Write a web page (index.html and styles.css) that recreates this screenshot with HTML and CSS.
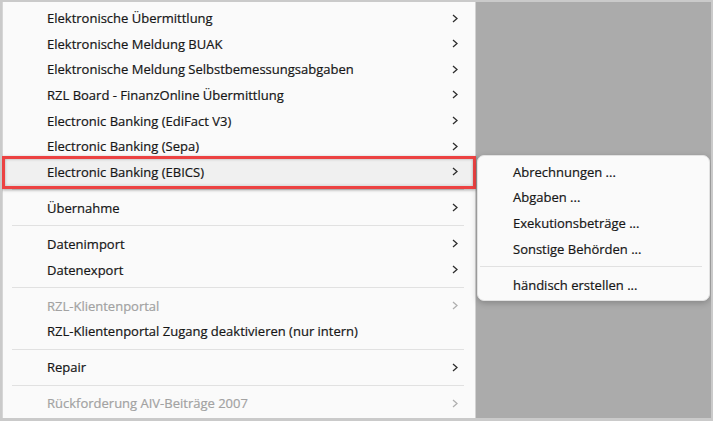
FILE: index.html
```html
<!DOCTYPE html>
<html lang="de">
<head>
<meta charset="utf-8">
<title>Menü</title>
<link rel="stylesheet" href="styles.css">
</head>
<body>
<div class="desktop">
  <div class="menu">
    <div class="item"><span class="label">Elektronische Übermittlung</span><svg class="chev" viewBox="0 0 6 9"><path d="M1 1 L5 4.5 L1 8"/></svg></div>
    <div class="item"><span class="label">Elektronische Meldung BUAK</span><svg class="chev" viewBox="0 0 6 9"><path d="M1 1 L5 4.5 L1 8"/></svg></div>
    <div class="item"><span class="label">Elektronische Meldung Selbstbemessungsabgaben</span><svg class="chev" viewBox="0 0 6 9"><path d="M1 1 L5 4.5 L1 8"/></svg></div>
    <div class="item"><span class="label">RZL Board - FinanzOnline Übermittlung</span><svg class="chev" viewBox="0 0 6 9"><path d="M1 1 L5 4.5 L1 8"/></svg></div>
    <div class="item"><span class="label">Electronic Banking (EdiFact V3)</span><svg class="chev" viewBox="0 0 6 9"><path d="M1 1 L5 4.5 L1 8"/></svg></div>
    <div class="item"><span class="label">Electronic Banking (Sepa)</span><svg class="chev" viewBox="0 0 6 9"><path d="M1 1 L5 4.5 L1 8"/></svg></div>
    <div class="item active"><span class="label">Electronic Banking (EBICS)</span><svg class="chev" viewBox="0 0 6 9"><path d="M1 1 L5 4.5 L1 8"/></svg></div>
    <div class="sep"></div>
    <div class="item"><span class="label">Übernahme</span><svg class="chev" viewBox="0 0 6 9"><path d="M1 1 L5 4.5 L1 8"/></svg></div>
    <div class="sep"></div>
    <div class="item"><span class="label">Datenimport</span><svg class="chev" viewBox="0 0 6 9"><path d="M1 1 L5 4.5 L1 8"/></svg></div>
    <div class="item"><span class="label">Datenexport</span><svg class="chev" viewBox="0 0 6 9"><path d="M1 1 L5 4.5 L1 8"/></svg></div>
    <div class="sep"></div>
    <div class="item disabled"><span class="label">RZL-Klientenportal</span><svg class="chev" viewBox="0 0 6 9"><path d="M1 1 L5 4.5 L1 8"/></svg></div>
    <div class="item"><span class="label">RZL-Klientenportal Zugang deaktivieren (nur intern)</span></div>
    <div class="sep"></div>
    <div class="item"><span class="label">Repair</span><svg class="chev" viewBox="0 0 6 9"><path d="M1 1 L5 4.5 L1 8"/></svg></div>
    <div class="sep"></div>
    <div class="item disabled"><span class="label">Rückforderung AIV-Beiträge 2007</span><svg class="chev" viewBox="0 0 6 9"><path d="M1 1 L5 4.5 L1 8"/></svg></div>
    <div class="item disabled"><span class="label">&nbsp;</span></div>
  </div>
  <div class="submenu">
    <div class="item"><span class="label">Abrechnungen ...</span></div>
    <div class="item"><span class="label">Abgaben ...</span></div>
    <div class="item"><span class="label">Exekutionsbeträge ...</span></div>
    <div class="item"><span class="label">Sonstige Behörden ...</span></div>
    <div class="sep"></div>
    <div class="item"><span class="label">händisch erstellen ...</span></div>
  </div>
</div>
</body>
</html>
```
FILE: styles.css
```css
html, body {
  margin: 0;
  padding: 0;
}
body {
  width: 713px;
  height: 421px;
  box-sizing: border-box;
  padding: 2px 2px 3px 2px;
  background: #cacaca;
  font-family: "Open Sans", "Noto Sans", sans-serif;
  font-size: 13px;
  color: #161616;
  -webkit-text-stroke: 0.2px currentColor;
  overflow: hidden;
}
.desktop {
  position: relative;
  height: 100%;
  background: #ababab;
  overflow: hidden;
}
.menu {
  width: 474px;
  box-sizing: border-box;
  background: #fafafa;
  border-left: 1px solid #d6d6d6;
  border-right: 1px solid #d2d2d2;
  padding-top: 3.2px;
  padding-bottom: 4px;
}
.item {
  position: relative;
  display: flex;
  align-items: center;
  height: 25.67px;
  line-height: 18px;
  white-space: nowrap;
}
.menu .item {
  padding-left: 44px;
  padding-right: 17px;
}
.label {
  flex: 1;
}
.chev {
  width: 6px;
  height: 9px;
  fill: none;
  stroke: #2e2e2e;
  stroke-width: 1.3;
}
.disabled {
  color: #a2a2a2;
}
.disabled .chev {
  stroke: #b0b0b0;
}
.active {
  background: #f0f0f0;
}
.active::after {
  content: "";
  position: absolute;
  left: -1px;
  right: -1px;
  top: -3.2px;
  bottom: -4.3px;
  border: 3px solid #ec4242;
  box-shadow: 0 1px 3px rgba(0, 0, 0, 0.35), inset 0 0 3px rgba(0, 0, 0, 0.3);
}
.sep {
  height: 10.33px;
  display: flex;
  align-items: center;
}
.sep::before {
  content: "";
  flex: 1;
  height: 1px;
  background: #e1e1e1;
}
.menu .sep {
  padding: 0 11px 0 9px;
}
.submenu {
  position: absolute;
  left: 475px;
  top: 153px;
  width: 233px;
  box-sizing: border-box;
  background: #fafafa;
  border: 1px solid #e2e2e2;
  border-radius: 7px;
  padding: 3px 0 2px;
  box-shadow: 0 2px 6px rgba(0, 0, 0, 0.22);
}
.submenu .item {
  padding-left: 35px;
}
.submenu .sep {
  padding: 0 7px 0 2px;
}
```
